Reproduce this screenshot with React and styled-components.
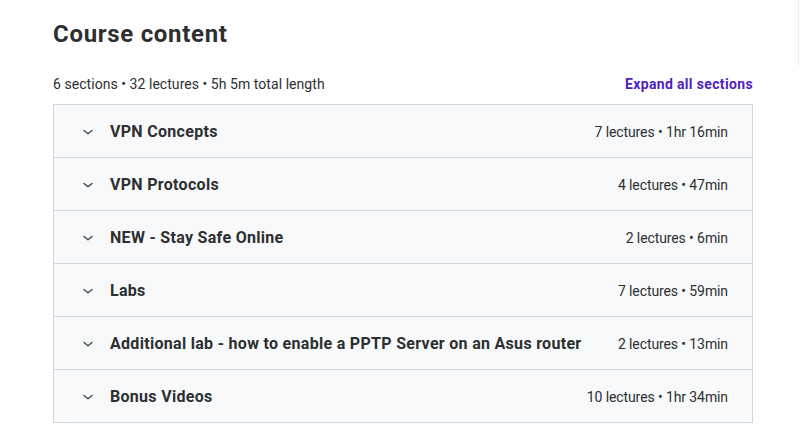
import React from "react";
import styled, { createGlobalStyle } from "styled-components";

const Global = createGlobalStyle`
  html, body { margin: 0; padding: 0; background: #fff; }
  body { font-family: Roboto, "Noto Sans", sans-serif; color: #2d2f31; }
`;

const Page = styled.div`
  width: 802px;
  height: 434px;
  box-sizing: border-box;
  padding: 18px 0 0 53px;
  position: relative;
  overflow: hidden;
`;

const EdgeLine = styled.div`
  position: absolute;
  right: 3px;
  top: 0;
  width: 1px;
  height: 66px;
  background: #eceef0;
`;

const Content = styled.section`
  width: 700px;
`;

const Title = styled.h2`
  margin: 0;
  font-size: 24px;
  font-weight: 700;
  line-height: 32px;
  letter-spacing: 0.7px;
`;

const Summary = styled.div`
  display: flex;
  justify-content: space-between;
  align-items: center;
  margin-top: 24px;
  height: 20px;
  margin-bottom: 10px;
`;

const Stats = styled.span`
  font-size: 14px;
  line-height: 20px;
  letter-spacing: 0.05px;
`;

const ExpandLink = styled.button`
  border: 0;
  background: none;
  padding: 0;
  font-family: inherit;
  font-size: 14px;
  font-weight: 700;
  letter-spacing: 0.35px;
  color: #5022c3;
  cursor: pointer;
`;

const Accordion = styled.div`
  border: 1px solid #d1d7dc;
  border-bottom: 0;
`;

const Row = styled.div`
  display: flex;
  align-items: center;
  box-sizing: border-box;
  height: 53px;
  padding: 2px 24px 0;
  background: #f7f9fa;
  border-bottom: 1px solid #d1d7dc;
`;

const Chevron = styled.span`
  width: 14px;
  height: 16px;
  display: flex;
  align-items: center;
  justify-content: center;
  margin: 0 15px 0 3px;
  color: #3e4143;
`;

const SectionTitle = styled.span`
  flex: 1;
  font-size: 16px;
  font-weight: 700;
  line-height: 22px;
  letter-spacing: 0.3px;
`;

const Meta = styled.span`
  font-size: 14px;
  line-height: 20px;
  white-space: nowrap;
  margin-left: 16px;
  letter-spacing: -0.1px;
`;

const sections = [
  ["VPN Concepts", "7 lectures • 1hr 16min"],
  ["VPN Protocols", "4 lectures • 47min"],
  ["NEW - Stay Safe Online", "2 lectures • 6min"],
  ["Labs", "7 lectures • 59min"],
  ["Additional lab - how to enable a PPTP Server on an Asus router", "2 lectures • 13min"],
  ["Bonus Videos", "10 lectures • 1hr 34min"],
];

const ChevronIcon = () => (
  <svg width="12" height="10" viewBox="0 0 12 10" fill="none">
    <path d="M2 3.5 L6 6.8 L10 3.5" stroke="currentColor" strokeWidth="1.3" strokeLinecap="round" strokeLinejoin="round" />
  </svg>
);

export default function App() {
  return (
    <>
      <Global />
      <Page>
        <EdgeLine />
        <Content>
          <Title>Course content</Title>
          <Summary>
            <Stats>6 sections • 32 lectures • 5h 5m total length</Stats>
            <ExpandLink>Expand all sections</ExpandLink>
          </Summary>
          <Accordion>
            {sections.map(([t, m]) => (
              <Row key={t}>
                <Chevron><ChevronIcon /></Chevron>
                <SectionTitle>{t}</SectionTitle>
                <Meta>{m}</Meta>
              </Row>
            ))}
          </Accordion>
        </Content>
      </Page>
    </>
  );
}
